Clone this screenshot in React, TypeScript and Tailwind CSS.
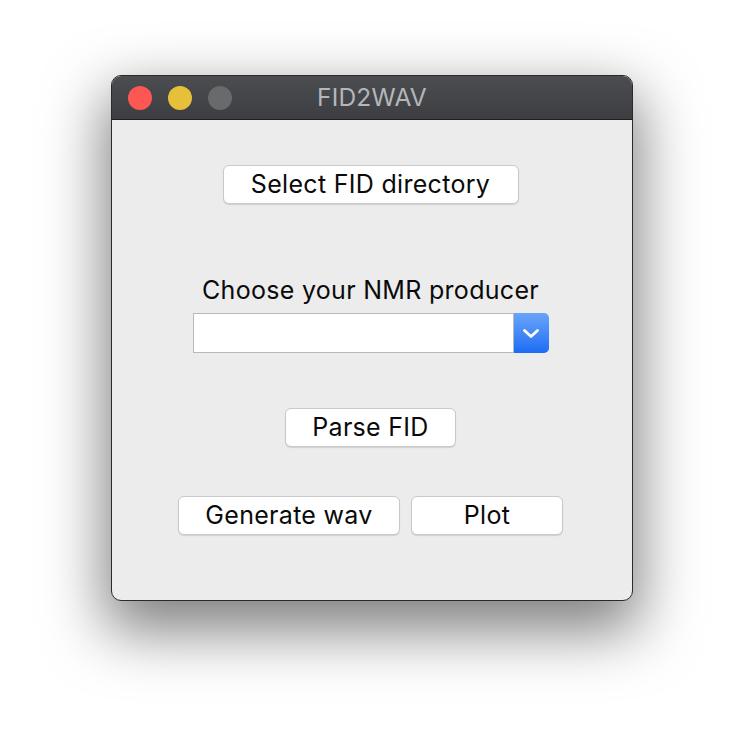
import React from "react";

function MacButton({ label, className }: { label: string; className: string }) {
  return (
    <button
      className={
        "flex items-center justify-center h-[39px] rounded-[6px] bg-white border border-[#c9c9c9] shadow-[0_1px_1px_rgba(0,0,0,0.12)] text-[25px] tracking-[0.3px] leading-none text-[#0a0a0a] " +
        className
      }
    >
      {label}
    </button>
  );
}

export default function App() {
  return (
    <div
      className="w-[744px] h-[748px] bg-white pt-[75px] pl-[111px]"
      style={{ fontFamily: "Inter, 'Liberation Sans', sans-serif" }}
    >
      <div className="w-[522px] h-[526px] rounded-[10px] border border-[#2a2a2a] bg-[#ececec] overflow-hidden shadow-[0_24px_60px_6px_rgba(0,0,0,0.5)] flex flex-col">
        <div className="relative h-[44px] shrink-0 bg-gradient-to-b from-[#4b4d50] to-[#3c3e41] border-b border-[#1e1e1e] flex items-center justify-center">
          <div className="absolute left-[16px] top-[10px] flex gap-[16px]">
            <span className="w-[24px] h-[24px] rounded-full bg-[#fd5753]" />
            <span className="w-[24px] h-[24px] rounded-full bg-[#e6c03b]" />
            <span className="w-[24px] h-[24px] rounded-full bg-[#696a6c]" />
          </div>
          <span className="text-[24.5px] tracking-[0.2px] text-[#b4b6b9] leading-none">FID2WAV</span>
        </div>
        <div className="flex flex-col items-center pt-[45px] pr-[3px]">
          <MacButton label="Select FID directory" className="w-[296px]" />
          <div className="mt-[72px] text-[25px] tracking-[0.3px] leading-[28px] text-[#0a0a0a]">Choose your NMR producer</div>
          <div className="mt-[9px] flex w-[356px] h-[40px]">
            <div className="flex-1 bg-white border border-[#b9b9b9]" />
            <div className="w-[35px] rounded-r-[5px] bg-gradient-to-b from-[#6aa4f9] to-[#1a6cf5] flex items-center justify-center">
              <svg width="18" height="11" viewBox="0 0 18 11" fill="none">
                <path d="M2.5 2.5 L9 8.5 L15.5 2.5" stroke="white" strokeWidth="2.8" strokeLinecap="round" strokeLinejoin="round" />
              </svg>
            </div>
          </div>
          <MacButton label="Parse FID" className="w-[171px] mt-[55px]" />
          <div className="mt-[49px] flex gap-[11px]">
            <MacButton label="Generate wav" className="w-[222px]" />
            <MacButton label="Plot" className="w-[152px]" />
          </div>
        </div>
      </div>
    </div>
  );
}
